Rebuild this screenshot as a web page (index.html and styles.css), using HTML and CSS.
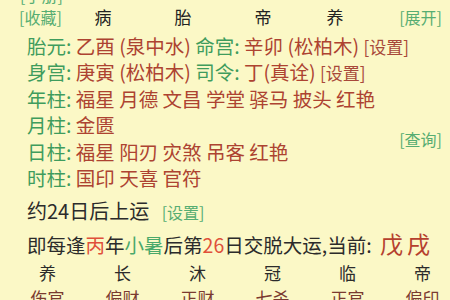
FILE: index.html
```html
<!DOCTYPE html>
<html lang="zh-CN">
<head>
<meta charset="utf-8">
<link rel="stylesheet" href="styles.css">
</head>
<body>
<div class="page">
  <div class="cut"><span class="link">[手册]</span></div>
  <div class="header">
    <span class="link">[收藏]</span>
    <span class="cell">病</span>
    <span class="cell">胎</span>
    <span class="cell">帝</span>
    <span class="cell">养</span>
    <span class="link right">[展开]</span>
  </div>
  <div class="info">
    <div class="row"><span class="lbl">胎元:</span> <span class="val">乙酉 (泉中水)</span> <span class="lbl">命宫:</span> <span class="val">辛卯 (松柏木)</span> <span class="set">[设置]</span></div>
    <div class="row"><span class="lbl">身宫:</span> <span class="val">庚寅 (松柏木)</span> <span class="lbl">司令:</span> <span class="val">丁(真诠)</span> <span class="set">[设置]</span></div>
    <div class="row"><span class="lbl">年柱:</span> <span class="val">福星 月德 文昌 学堂 驿马 披头 红艳</span></div>
    <div class="row"><span class="lbl">月柱:</span> <span class="val">金匮</span></div>
    <div class="query link">[查询]</div>
    <div class="row"><span class="lbl">日柱:</span> <span class="val">福星 阳刃 灾煞 吊客 红艳</span></div>
    <div class="row"><span class="lbl">时柱:</span> <span class="val">国印 天喜 官符</span></div>
  </div>
  <div class="yun">约24日后上运 <span class="link small">[设置]</span></div>
  <div class="jiao">即每逢<span class="hot">丙</span>年<span class="grn">小暑</span>后第<span class="hot">26</span>日交脱大运,当前: <span class="cur">戊戌</span></div>
  <div class="cols stage">
    <span>养</span><span>长</span><span>沐</span><span>冠</span><span>临</span><span>帝</span>
  </div>
  <div class="cols gods">
    <span>伤官</span><span>偏财</span><span>正财</span><span>七杀</span><span>正官</span><span>偏印</span>
  </div>
</div>
</body>
</html>
```
FILE: styles.css
```css
html, body {
  margin: 0;
  padding: 0;
  background: #fbf8c6;
  overflow: hidden;
}
body {
  width: 450px;
  height: 300px;
  font-family: "Noto Sans CJK SC", "Noto Sans", sans-serif;
  color: #2b2b2b;
}
.page {
  display: flex;
  flex-direction: column;
}
.link {
  color: #56ad72;
  font-size: 16px;
  white-space: nowrap;
}
.cut {
  margin-top: -15px;
  height: 21px;
  line-height: 20px;
  padding-left: 20px;
}
.header {
  display: grid;
  grid-template-columns: 44px 80px 80px 80px 64px 1fr;
  align-items: center;
  height: 22px;
  line-height: 22px;
  padding-left: 19px;
  padding-right: 8px;
  white-space: nowrap;
}
.header .cell {
  text-align: center;
  color: #222;
  font-size: 17px;
}
.header .right {
  justify-self: end;
}
.info {
  margin-top: 5px;
  display: grid;
  grid-template-columns: minmax(0, 1fr) auto;
  grid-auto-rows: 26.4px;
  padding-left: 27px;
  padding-right: 8px;
}
.row {
  grid-column: 1;
  font-size: 19.5px;
  line-height: 26.4px;
  white-space: nowrap;
}
.lbl { color: #3f9c5d; }
.val { color: #ad4331; }
.set { color: #a8493a; font-size: 17px; }
.query {
  grid-column: 2;
  grid-row: 4 / 6;
  align-self: center;
}
.yun {
  margin-top: 4px;
  padding-left: 27px;
  height: 32px;
  line-height: 32px;
  font-size: 20px;
  white-space: nowrap;
}
.small { margin-left: 8px; }
.jiao {
  padding-left: 27px;
  height: 32px;
  line-height: 32px;
  font-size: 19.5px;
  white-space: nowrap;
}
.hot { color: #e0503a; }
.grn { color: #4aa96b; }
.cur { color: #b5402e; font-size: 23px; margin-left: 4px; letter-spacing: 4px; }
.cols {
  display: grid;
  grid-template-columns: repeat(6, 75px);
  padding-left: 10px;
  white-space: nowrap;
}
.cols span { text-align: center; }
.stage {
  height: 28px;
  line-height: 28px;
  font-size: 17px;
  color: #2b2b2b;
}
.gods {
  height: 22px;
  line-height: 22px;
  font-size: 17px;
  color: #7a3a30;
}
```
